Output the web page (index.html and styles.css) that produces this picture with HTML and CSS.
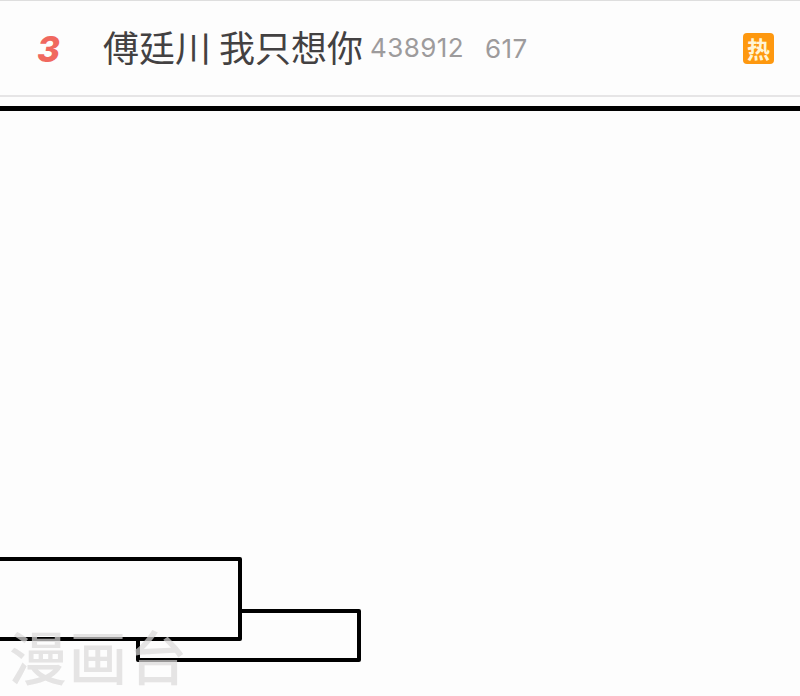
FILE: index.html
```
<!DOCTYPE html>
<html lang="zh-CN">
<head>
<meta charset="utf-8">
<title>傅廷川 我只想你</title>
<link rel="stylesheet" href="styles.css">
</head>
<body>
<div class="page">
	<div class="hot">
		<span class="rank">3</span>
		<span class="title">傅廷川 我只想你</span>
		<span class="num">438912</span>
		<span class="num num2">617</span>
		<span class="tag">热</span>
	</div>
	<div class="panel">
		<div class="box box2"></div>
		<div class="box box1"></div>
		<div class="mark">漫画台</div>
	</div>
</div>
</body>
</html>
```
FILE: styles.css
```
body{
	margin:0;
	background:#fdfdfd;
	font-family:"Noto Sans CJK SC",sans-serif;
}
.page{
	height:696px;
	overflow:hidden;
}
/* 热搜条目 */
.hot{
	display:flex;
	align-items:center;
	box-sizing:border-box;
	height:97px;
	padding:0 26px 0 37px;
	border-top:1px solid #dedede;
	border-bottom:2px solid #e6e5e6;
	white-space:nowrap;
}
.rank{
	width:66px;
	padding-top:1px;
	color:#f0685f;
	font:italic 800 35px/40px "Inter",sans-serif;
}
.title{
	width:267px;
	padding-bottom:4px;
	color:#434142;
	font-size:36px;
	line-height:50px;
}
.num{
	width:115px;
	color:#9d9b9c;
	font:26px/40px "Inter",sans-serif;
	letter-spacing:.4px;
}
.num2{
	padding-top:2px;
}
.tag{
	width:31px;
	height:31px;
	margin-left:auto;
	border-radius:4px;
	background:#fe980f;
	color:#fff4d5;
	font-size:23px;
	font-weight:700;
	line-height:30px;
	text-align:center;
}
/* 漫画分格 */
.panel{
	position:relative;
	height:585px;
	margin-top:9px;
	border-top:5px solid #000;
}
.box{
	position:absolute;
	box-sizing:border-box;
	border:4px solid #000;
	border-radius:2px;
	background:#fdfdfd;
}
.box1{
	left:-6px;
	top:446px;
	width:248px;
	height:84px;
}
.box2{
	left:136px;
	top:498px;
	width:225px;
	height:53px;
}
.mark{
	position:absolute;
	left:9px;
	top:512px;
	color:rgba(218,216,216,.7);
	font-size:58px;
	font-weight:500;
	line-height:64px;
	letter-spacing:2px;
}
```
